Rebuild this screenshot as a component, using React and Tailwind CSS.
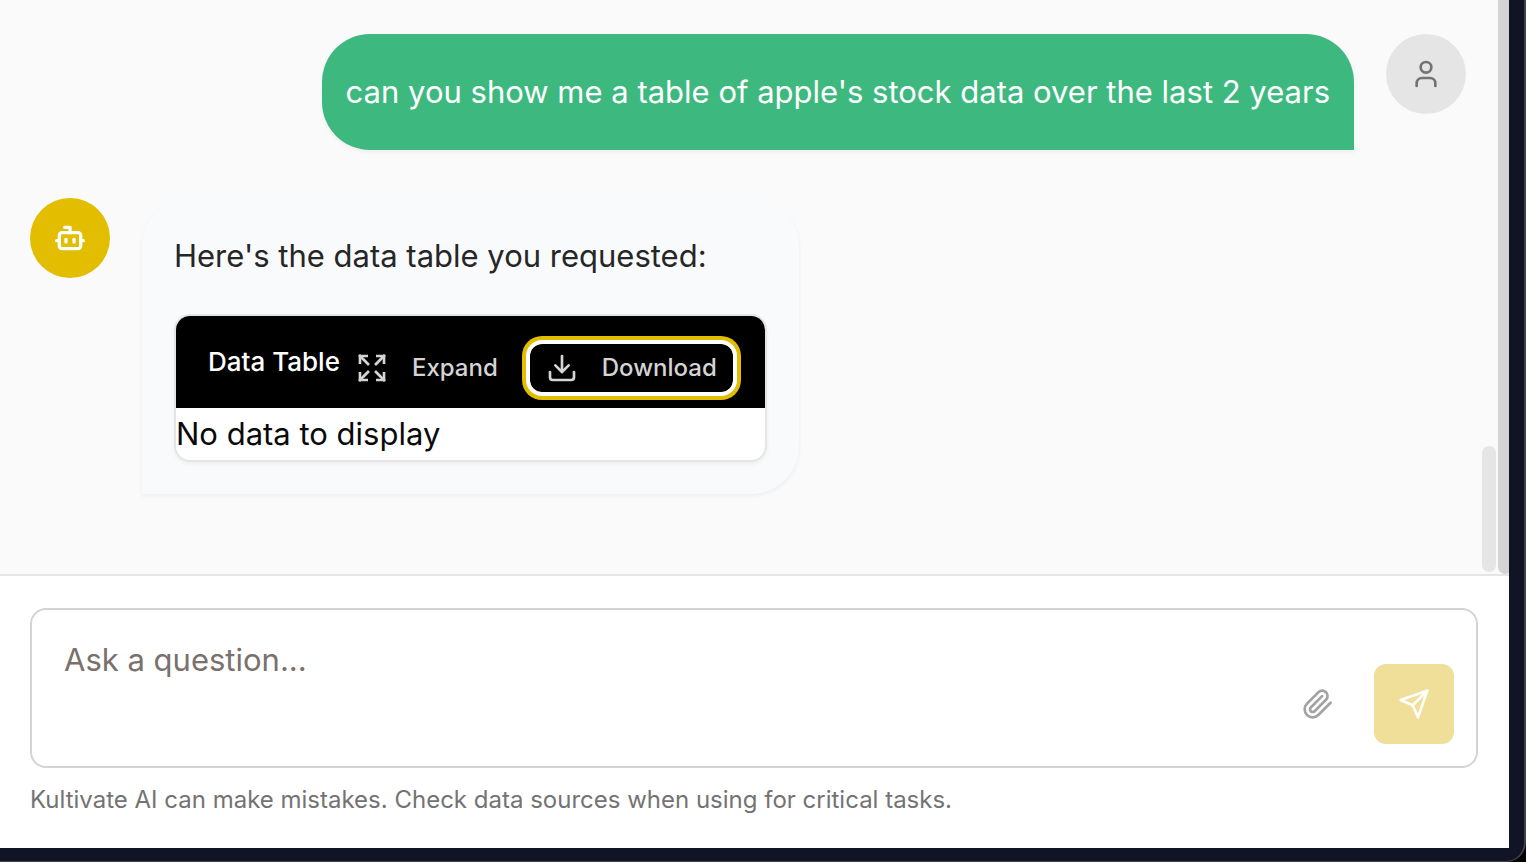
import { Bot, Download, Expand, User } from "lucide-react";

function PaperclipIcon() {
  return (
    <svg
      className="size-8"
      viewBox="0 0 24 24"
      fill="none"
      stroke="currentColor"
      strokeWidth="2"
      strokeLinecap="round"
      strokeLinejoin="round"
      aria-hidden="true"
    >
      <path d="m21.44 11.05-9.19 9.19a6 6 0 0 1-8.49-8.49l8.57-8.57A4 4 0 1 1 18 8.84l-8.59 8.57a2 2 0 0 1-2.83-2.83l8.49-8.48" />
    </svg>
  );
}

function SendIcon() {
  return (
    <svg
      className="size-8"
      viewBox="0 0 24 24"
      fill="none"
      stroke="currentColor"
      strokeWidth="2"
      strokeLinecap="round"
      strokeLinejoin="round"
      aria-hidden="true"
    >
      <path d="m22 2-7 20-4-9-9-4Z" />
      <path d="M22 2 11 13" />
    </svg>
  );
}

function UserMessage({ children }) {
  return (
    <div className="flex items-start justify-end gap-8">
      <p className="rounded-[48px] rounded-br-none bg-[#3db97f] px-6 py-8 text-[31px] leading-[52px] text-white shadow-[0_2px_4px_rgba(0,0,0,0.05)]">
        {children}
      </p>
      <div className="flex size-20 shrink-0 items-center justify-center rounded-full bg-[#e5e5e5] text-[#737373]">
        <User className="size-8" />
      </div>
    </div>
  );
}

function DataTableCard() {
  return (
    <section className="mt-8 w-[593px] overflow-hidden rounded-2xl border-2 border-[#e5e5e5] bg-white shadow-[0_2px_4px_rgba(0,0,0,0.05)]">
      <header className="flex items-start bg-black px-8 py-6">
        <h2 className="text-[26px] leading-[44px] font-medium whitespace-nowrap text-white">
          Data Table
        </h2>
        <div className="mt-1 -mb-2 flex gap-4 text-2xl font-medium text-[#d4d4d4]">
          <button type="button" className="flex h-12 items-center gap-6 rounded-xl px-4">
            <Expand className="size-8" strokeLinecap="square" strokeLinejoin="miter" />
            Expand
          </button>
          <button
            type="button"
            className="flex h-12 items-center gap-6 rounded-xl px-4 ring-4 ring-[#e2bd00] ring-offset-4 ring-offset-white"
          >
            <Download className="size-8" />
            Download
          </button>
        </div>
      </header>
      <p className="text-[31px] leading-[52px] text-[#0a0a0a]">No data to display</p>
    </section>
  );
}

function BotMessage() {
  return (
    <div className="flex items-start gap-8">
      <div className="flex size-20 shrink-0 items-center justify-center rounded-full bg-[#e2bd00] text-white">
        <Bot className="size-8" strokeWidth={2.5} />
      </div>
      <div className="rounded-[48px] rounded-bl-none bg-[#f9fafc] p-8 shadow-[0_2px_4px_rgba(0,0,0,0.05)]">
        <p className="text-[31px] leading-[52px] text-[#262626]">
          Here's the data table you requested:
        </p>
        <DataTableCard />
      </div>
    </div>
  );
}

function Composer() {
  return (
    <footer className="border-t-2 border-[#e5e5e5] bg-white py-8 pr-[31px] pl-[30px]">
      <form
        className="flex items-end rounded-2xl border-2 border-[#d4d4d4] bg-white"
        onSubmit={(event) => event.preventDefault()}
      >
        <textarea
          aria-label="Ask a question"
          placeholder="Ask a question..."
          className="h-[156px] min-w-0 flex-1 resize-none px-8 py-6 text-[31px] leading-[52px] text-[#262626] outline-none placeholder:text-[#78716c]"
        />
        <div className="flex gap-4 pr-[22px] pb-[22px]">
          <button
            type="button"
            aria-label="Attach a file"
            className="flex size-20 items-center justify-center rounded-xl text-[#a3a3a3]"
          >
            <PaperclipIcon />
          </button>
          <button
            type="submit"
            aria-label="Send"
            className="flex size-20 items-center justify-center rounded-xl bg-[#f0df98] text-white"
          >
            <SendIcon />
          </button>
        </div>
      </form>
      <p className="mt-4 text-2xl text-[#737373]">
        Kultivate AI can make mistakes. Check data sources when using for critical tasks.
      </p>
    </footer>
  );
}

export default function App() {
  return (
    <div className="h-screen overflow-hidden bg-black font-['Inter','Liberation_Sans',sans-serif]">
      <div className="flex h-full flex-col rounded-br-[20px] border-r-2 border-b border-[#3f414c] bg-[#101424] pr-[15px] pb-[13px]">
        <main className="flex min-h-0 flex-1 flex-col bg-white">
          <div className="flex min-h-0 flex-1 bg-[#fafafa]">
            <div className="flex min-w-0 flex-1 flex-col gap-12 pt-[34px] pr-4 pl-[30px]">
              <UserMessage>
                can you show me a table of apple's stock data over the last 2 years
              </UserMessage>
              <BotMessage />
            </div>
            <div className="mr-0.5 flex w-3.5 flex-col justify-end pb-0.5">
              <div className="h-[126px] rounded-full bg-[#e5e5e5]" />
            </div>
            <div className="w-[11px] overflow-hidden">
              <div className="h-full w-3.5 rounded-b-full bg-[#d4d4d4]" />
            </div>
          </div>
          <Composer />
        </main>
      </div>
    </div>
  );
}
